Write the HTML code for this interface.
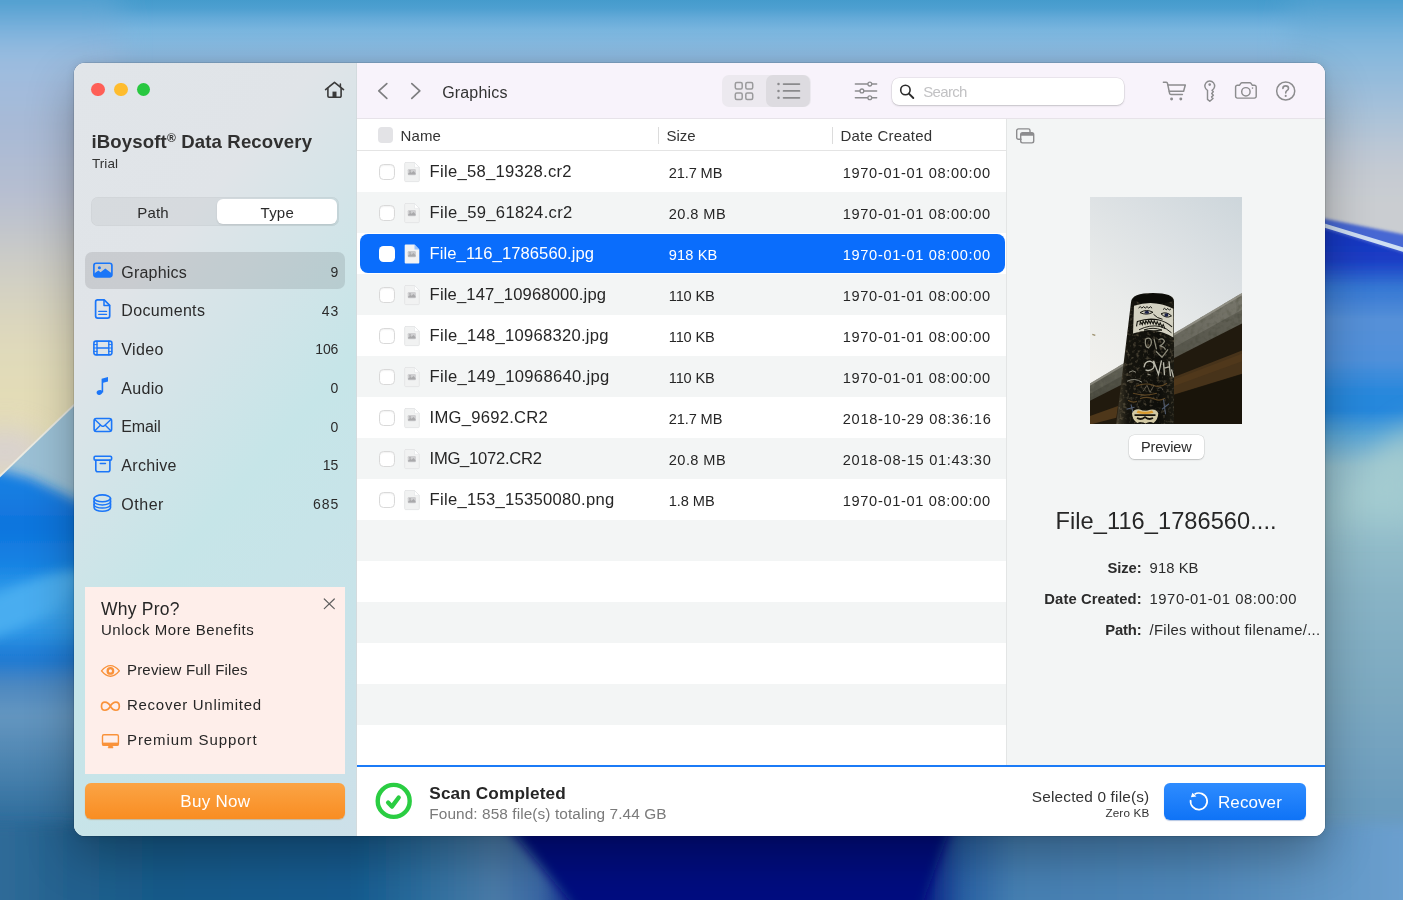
<!DOCTYPE html>
<html><head><meta charset="utf-8"><title>iBoysoft Data Recovery</title>
<style>
*{box-sizing:border-box;margin:0;padding:0}
html,body{width:1403px;height:900px;overflow:hidden;background:#4a8ec8;font-family:"Liberation Sans",sans-serif;color:#2b2b2b}
.abs{position:absolute}
#wall{position:absolute;left:0;top:0;width:1403px;height:900px}
#shadow{position:absolute;left:74px;top:63px;width:1251px;height:773px;border-radius:11px;box-shadow:0 20px 48px rgba(0,0,0,.30),0 0 10px rgba(0,0,0,.10),0 0 0 .5px rgba(0,0,0,.18)}
#win{position:absolute;left:74px;top:63px;width:1251px;height:773px;border-radius:11px;overflow:hidden;background:#fff;will-change:transform}
#side{position:absolute;left:0;top:0;width:283px;height:773px;background:linear-gradient(131deg,#e1e5e9 0%,#e0e4e8 26%,#d3e4e8 41%,#c6e5e8 56%,#c8e3e9 80%,#cde0e9 100%);border-right:1px solid #d3dbde}
#tool{position:absolute;left:283px;top:0;width:968px;height:56px;background:#f8f3fb;border-bottom:1px solid #e7e3e9}
#list{position:absolute;left:283px;top:56px;width:650px;height:647px;background:#fff;border-right:1px solid #e3e5e5}
#prev{position:absolute;left:933px;top:56px;width:318px;height:647px;background:#f3f5f5}
#bot{position:absolute;left:283px;top:702px;width:968px;height:71px;background:#fff;border-top:2px solid #1b7bf7}
.t{position:absolute;white-space:nowrap;line-height:1}
</style></head><body>
<svg id="wall" width="1403" height="900" viewBox="0 0 1403 900">
<defs>
<filter id="b1" filterUnits="userSpaceOnUse" x="-200" y="-200" width="1900" height="1400"><feGaussianBlur stdDeviation="0.7"/></filter>
<filter id="b4" filterUnits="userSpaceOnUse" x="-200" y="-200" width="1900" height="1400"><feGaussianBlur stdDeviation="1.4"/></filter>
<filter id="b10" filterUnits="userSpaceOnUse" x="-200" y="-200" width="1900" height="1400"><feGaussianBlur stdDeviation="6"/></filter>
<filter id="b20" filterUnits="userSpaceOnUse" x="-200" y="-200" width="1900" height="1400"><feGaussianBlur stdDeviation="14"/></filter>
<filter id="b40" filterUnits="userSpaceOnUse" x="-200" y="-200" width="1900" height="1400"><feGaussianBlur stdDeviation="30"/></filter>
<linearGradient id="gtop" gradientUnits="userSpaceOnUse" x1="0" y1="0" x2="0" y2="900"><stop offset="0.0000" stop-color="#459bcc"/><stop offset="0.0089" stop-color="#4d9fd0"/><stop offset="0.0200" stop-color="#64aad8"/><stop offset="0.0333" stop-color="#79b5de"/><stop offset="0.0467" stop-color="#84b9e0"/><stop offset="0.0600" stop-color="#8ab8de"/><stop offset="0.0733" stop-color="#90b8dc"/><stop offset="0.1333" stop-color="#9bbcdc"/><stop offset="0.2444" stop-color="#b4c2d6"/><stop offset="1.0000" stop-color="#b4c2d6"/></linearGradient><linearGradient id="gleft" gradientUnits="userSpaceOnUse" x1="0" y1="0" x2="0" y2="900"><stop offset="0.0000" stop-color="#489ccd"/><stop offset="0.0244" stop-color="#70aedb"/><stop offset="0.0533" stop-color="#93bbe0"/><stop offset="0.0833" stop-color="#a0bcde"/><stop offset="0.1444" stop-color="#a8b9d5"/><stop offset="0.2222" stop-color="#b8bfd0"/><stop offset="0.3000" stop-color="#cfcec5"/><stop offset="0.3778" stop-color="#dfd9bb"/><stop offset="0.4667" stop-color="#e4ddb5"/><stop offset="1.0000" stop-color="#e4ddb5"/></linearGradient><linearGradient id="gleftb" gradientUnits="userSpaceOnUse" x1="0" y1="400" x2="0" y2="900"><stop offset="0.0000" stop-color="#1a80e2"/><stop offset="0.1600" stop-color="#1a80e2"/><stop offset="0.2500" stop-color="#0f74de"/><stop offset="0.3300" stop-color="#1583e3"/><stop offset="0.4100" stop-color="#3fa7ed"/><stop offset="0.4640" stop-color="#2e96e6"/><stop offset="0.5160" stop-color="#1a78d4"/><stop offset="0.5700" stop-color="#4d88c0"/><stop offset="0.6300" stop-color="#6496c0"/><stop offset="0.7300" stop-color="#4c84b0"/><stop offset="0.8400" stop-color="#2f6d9c"/><stop offset="1.0000" stop-color="#1f5c90"/></linearGradient><linearGradient id="gright" gradientUnits="userSpaceOnUse" x1="0" y1="0" x2="0" y2="900"><stop offset="0.0000" stop-color="#459bcc"/><stop offset="0.0222" stop-color="#68acd9"/><stop offset="0.0533" stop-color="#84b8dd"/><stop offset="0.0833" stop-color="#92badb"/><stop offset="0.1278" stop-color="#a9c2d9"/><stop offset="0.1778" stop-color="#c2c9d3"/><stop offset="0.2222" stop-color="#cacdd1"/><stop offset="1.0000" stop-color="#cacdd1"/></linearGradient><linearGradient id="grightb" gradientUnits="userSpaceOnUse" x1="0" y1="225" x2="0" y2="900"><stop offset="0.0000" stop-color="#1735c0"/><stop offset="0.0519" stop-color="#1a3cc5"/><stop offset="0.0919" stop-color="#3476d3"/><stop offset="0.1407" stop-color="#5590d8"/><stop offset="0.2000" stop-color="#4f90da"/><stop offset="0.2444" stop-color="#2a88dc"/><stop offset="0.2741" stop-color="#2487dc"/><stop offset="0.3111" stop-color="#5aa6d6"/><stop offset="0.3585" stop-color="#93bfcd"/><stop offset="0.4444" stop-color="#95bfcb"/><stop offset="0.5481" stop-color="#88b3c5"/><stop offset="0.7037" stop-color="#7ba8c0"/><stop offset="0.8519" stop-color="#6b9cbe"/><stop offset="1.0000" stop-color="#6297c2"/></linearGradient><linearGradient id="gbot" gradientUnits="userSpaceOnUse" x1="0" y1="0" x2="1403" y2="0"><stop offset="0.0000" stop-color="#2f6b98"/><stop offset="0.0428" stop-color="#25628f"/><stop offset="0.1140" stop-color="#175a8a"/><stop offset="0.2495" stop-color="#135a8e"/><stop offset="0.3065" stop-color="#2f6f9f"/><stop offset="0.3528" stop-color="#4a7ba8"/><stop offset="0.3849" stop-color="#3a68a4"/><stop offset="0.4170" stop-color="#021283"/><stop offset="0.4989" stop-color="#010f80"/><stop offset="0.6522" stop-color="#010f80"/><stop offset="0.6878" stop-color="#2a62a4"/><stop offset="0.7234" stop-color="#457fb2"/><stop offset="0.8553" stop-color="#4f87b8"/><stop offset="0.9337" stop-color="#5f95c4"/><stop offset="1.0000" stop-color="#6b9fce"/></linearGradient>
</defs>
<rect width="1403" height="900" fill="url(#gtop)"/>
<!-- left column -->
<rect x="-80" y="-80" width="200" height="1060" fill="url(#gleft)" filter="url(#b20)"/>
<!-- right column -->
<rect x="1290" y="-80" width="200" height="1060" fill="url(#gright)" filter="url(#b20)"/>
<g filter="url(#b4)">
<polygon points="1290,212 1460,246 1460,940 1290,940" fill="url(#grightb)"/>
<polygon points="1290,212 1460,246 1460,270 1290,218" fill="#4768d3"/>
</g>
<polygon points="1290,213 1460,264.500 1460,269.500 1290,217" fill="#cfdff3" filter="url(#b1)"/>
<polygon points="1420,420 1420,520 1335,520 1335,490" fill="#a3cbd0" filter="url(#b20)"/>
<ellipse cx="5" cy="452" rx="42" ry="24" fill="#d6cfd6" filter="url(#b20)" opacity=".8"/>
<!-- left lower blue -->
<polygon points="-20,495 110,370 110,940 -20,940" fill="#9bc0d5" filter="url(#b1)"/>
<clipPath id="cdiag"><polygon points="-20,495 110,370 110,940 -20,940"/></clipPath>
<g clip-path="url(#cdiag)"><g filter="url(#b10)">
<polygon points="-40,462 0,470 30,478 60,492 80,502 130,512 130,960 -40,960" fill="url(#gleftb)"/>
</g></g>
<polygon points="-20,496.5 110,371.5 110,369 -20,494" fill="#ecebe2" filter="url(#b1)"/>
<ellipse cx="15" cy="608" rx="80" ry="19" fill="#48adf0" transform="rotate(-24 15 608)" filter="url(#b10)"/>
<!-- bottom strip -->
<rect x="-40" y="824" width="1483" height="140" fill="url(#gbot)" filter="url(#b10)"/>
<polygon points="498,815 955,815 918,915 582,915" fill="#010f80" filter="url(#b10)"/>
</svg>
<div id="shadow"></div>
<div id="win">
<div id="side"></div><div id="tool"></div><div id="list"></div><div id="prev"></div><div id="bot"></div>
<div class="abs" style="left:16.90px;top:19.70px;width:13.80px;height:13.80px;border-radius:50%;background:#fe5f57"></div>
<div class="abs" style="left:39.80px;top:19.70px;width:13.80px;height:13.80px;border-radius:50%;background:#febc2e"></div>
<div class="abs" style="left:62.50px;top:19.70px;width:13.80px;height:13.80px;border-radius:50%;background:#28c840"></div>
<svg class="abs" style="left:248.00px;top:15.00px;" width="26.00" height="24.00" viewBox="322 78 26 24"><path d="M325.6 89.6 L334.5 82.3 L343.5 89.6" fill="none" stroke="#3a3a3a" stroke-width="1.6" stroke-linecap="round" stroke-linejoin="round" /><path d="M327.9 88.4 V96 a1.2 1.2 0 0 0 1.2 1.2 H339.9 a1.2 1.2 0 0 0 1.2 -1.2 V88.4" fill="none" stroke="#3a3a3a" stroke-width="1.6" stroke-linecap="round" stroke-linejoin="round" /><path d="M340.4 83.9 V87" fill="none" stroke="#3a3a3a" stroke-width="1.5" stroke-linecap="round" stroke-linejoin="round" /><rect x="332.5" y="91.6" width="4" height="5.6" fill="#3a3a3a"/></svg>
<div class="t" style="top:70.00px;font-size:18.6px;color:#303030;font-weight:bold;letter-spacing:0.137px;left:17.40px;">iBoysoft<span style="font-size:12px;position:relative;top:-6.5px">&#174;</span> Data Recovery</div>
<div class="t" style="top:94.00px;font-size:13.5px;color:#333;letter-spacing:0.062px;left:18.00px;">Trial</div>
<div class="abs" style="left:16.90px;top:133.80px;width:248.10px;height:29.60px;background:rgba(0,0,0,.045);border-radius:7px;box-shadow:inset 0 0 0 .5px rgba(0,0,0,.04)"></div>
<div class="abs" style="left:143.30px;top:135.90px;width:119.70px;height:24.80px;background:#fff;border-radius:6px;box-shadow:0 1px 2px rgba(0,0,0,.10)"></div>
<div class="t" style="top:142.00px;font-size:15px;color:#2b2b2b;letter-spacing:0.18px;left:79.09px;transform:translateX(-50%);">Path</div>
<div class="t" style="top:142.00px;font-size:15px;color:#2b2b2b;letter-spacing:0.223px;left:203.31px;transform:translateX(-50%);">Type</div>
<div class="abs" style="left:11.20px;top:188.90px;width:259.80px;height:37.50px;background:rgba(0,0,0,.10);border-radius:7px"></div>
<div class="t" style="top:202.00px;font-size:16px;color:#2b2b2b;letter-spacing:0.196px;left:47.30px;">Graphics</div>
<div class="t" style="top:202.00px;font-size:14px;color:#2b2b2b;right:986.60px;">9</div>
<svg class="abs" style="left:16.00px;top:194.15px;" width="26.00" height="26.00" viewBox="90 257.15 26 26.0"><rect x="93.9" y="263.40" width="18" height="13.6" rx="2.3" fill="none" stroke="#1b76f8" stroke-width="1.7" stroke-linecap="round" stroke-linejoin="round" /><circle cx="99.4" cy="267.85" r="1.55" fill="#1b76f8"/><path d="M94.2 273.55 L98.4 270.75 L100.6 272.45 L105.3 268.55 L111.6 273.35 V276.75 H94.2 Z" fill="#1b76f8"/></svg>
<div class="t" style="top:240.00px;font-size:16px;color:#2b2b2b;letter-spacing:0.335px;left:47.30px;">Documents</div>
<div class="t" style="top:241.00px;font-size:14px;color:#2b2b2b;letter-spacing:1.022px;right:985.58px;">43</div>
<svg class="abs" style="left:16.00px;top:233.20px;" width="26.00" height="26.00" viewBox="90 296.2 26 26.0"><path d="M97.6 300.10 H104.2 L109.7 305.60 V316.30 A2 2 0 0 1 107.7 318.30 H97.6 A2 2 0 0 1 95.6 316.30 V302.10 A2 2 0 0 1 97.6 300.10 Z" fill="none" stroke="#1b76f8" stroke-width="1.7" stroke-linecap="round" stroke-linejoin="round" /><path d="M104 300.40 V305.70 H109.5" fill="none" stroke="#1b76f8" stroke-width="1.5" stroke-linecap="round" stroke-linejoin="round" /><path d="M98.8 311.60 H106.5 M98.8 314.60 H106.5" fill="none" stroke="#1b76f8" stroke-width="1.4" stroke-linecap="round" stroke-linejoin="round" /></svg>
<div class="t" style="top:279.00px;font-size:16px;color:#2b2b2b;letter-spacing:0.365px;left:47.30px;">Video</div>
<div class="t" style="top:279.00px;font-size:14px;color:#2b2b2b;letter-spacing:-0.08px;right:986.68px;">106</div>
<svg class="abs" style="left:16.00px;top:271.70px;" width="26.00" height="26.00" viewBox="90 334.7 26 26.0"><rect x="93.9" y="340.85" width="18" height="13.7" rx="2" fill="none" stroke="#1b76f8" stroke-width="1.6" stroke-linecap="round" stroke-linejoin="round" /><path d="M97 340.90 V354.50 M108.8 340.90 V354.50 M97 347.70 H108.8" fill="none" stroke="#1b76f8" stroke-width="1.4" stroke-linecap="round" stroke-linejoin="round" /><path d="M94 344.30 H97 M108.8 344.30 H111.8" fill="none" stroke="#1b76f8" stroke-width="1" stroke-linecap="round" stroke-linejoin="round" /><path d="M94 347.70 H97 M108.8 347.70 H111.8" fill="none" stroke="#1b76f8" stroke-width="1" stroke-linecap="round" stroke-linejoin="round" /><path d="M94 351.10 H97 M108.8 351.10 H111.8" fill="none" stroke="#1b76f8" stroke-width="1" stroke-linecap="round" stroke-linejoin="round" /></svg>
<div class="t" style="top:318.00px;font-size:16px;color:#2b2b2b;letter-spacing:0.295px;left:47.30px;">Audio</div>
<div class="t" style="top:318.00px;font-size:14px;color:#2b2b2b;right:986.60px;">0</div>
<svg class="abs" style="left:16.00px;top:309.90px;" width="26.00" height="26.00" viewBox="90 372.9 26 26.0"><ellipse cx="99.5" cy="392.40" rx="2.9" ry="2.3" transform="rotate(-20 99.5 392.40)" fill="#1b76f8"/><path d="M101.6 392.50 V378.60 L108 376.90 V381.50 L103.2 382.70 V392.50 Z" fill="#1b76f8"/></svg>
<div class="t" style="top:356.00px;font-size:16px;color:#2b2b2b;letter-spacing:-0.154px;left:47.30px;">Email</div>
<div class="t" style="top:357.00px;font-size:14px;color:#2b2b2b;right:986.60px;">0</div>
<svg class="abs" style="left:16.00px;top:349.00px;" width="26.00" height="26.00" viewBox="90 412.0 26 26.0"><rect x="94.1" y="418.50" width="17.5" height="13" rx="2.2" fill="none" stroke="#1b76f8" stroke-width="1.6" stroke-linecap="round" stroke-linejoin="round" /><path d="M94.8 419.40 L101.6 425.90 Q102.85 426.90 104.1 425.90 L110.9 419.40" fill="none" stroke="#1b76f8" stroke-width="1.4" stroke-linecap="round" stroke-linejoin="round" /><path d="M94.9 430.70 L100.4 425.20 M110.8 430.70 L105.3 425.20" fill="none" stroke="#1b76f8" stroke-width="1.4" stroke-linecap="round" stroke-linejoin="round" /></svg>
<div class="t" style="top:395.00px;font-size:16px;color:#2b2b2b;letter-spacing:0.307px;left:47.30px;">Archive</div>
<div class="t" style="top:395.00px;font-size:14px;color:#2b2b2b;right:986.60px;">15</div>
<svg class="abs" style="left:16.00px;top:387.90px;" width="26.00" height="26.00" viewBox="90 450.9 26 26.0"><rect x="94.1" y="456.10" width="17.5" height="3.9" rx="1.2" fill="none" stroke="#1b76f8" stroke-width="1.6" stroke-linecap="round" stroke-linejoin="round" /><path d="M95.8 460.10 V469.60 A2 2 0 0 0 97.8 471.60 H107.9 A2 2 0 0 0 109.9 469.60 V460.10" fill="none" stroke="#1b76f8" stroke-width="1.6" stroke-linecap="round" stroke-linejoin="round" /><path d="M100.3 463.40 H105.4" fill="none" stroke="#1b76f8" stroke-width="1.6" stroke-linecap="round" stroke-linejoin="round" /></svg>
<div class="t" style="top:434.00px;font-size:16px;color:#2b2b2b;letter-spacing:0.521px;left:47.30px;">Other</div>
<div class="t" style="top:434.00px;font-size:14px;color:#2b2b2b;letter-spacing:0.97px;right:985.63px;">685</div>
<svg class="abs" style="left:16.00px;top:426.90px;" width="26.00" height="26.00" viewBox="90 489.9 26 26.0"><ellipse cx="102.3" cy="498.20" rx="8.2" ry="3.4" fill="none" stroke="#1b76f8" stroke-width="1.6" stroke-linecap="round" stroke-linejoin="round" /><path d="M94.1 498.20 V507.70 A8.2 3.4 0 0 0 110.5 507.70 V498.20" fill="none" stroke="#1b76f8" stroke-width="1.6" stroke-linecap="round" stroke-linejoin="round" /><path d="M94.1 501.40 A8.2 3.4 0 0 0 110.5 501.40 M94.1 504.60 A8.2 3.4 0 0 0 110.5 504.60" fill="none" stroke="#1b76f8" stroke-width="1.5" stroke-linecap="round" stroke-linejoin="round" /></svg>
<div class="abs" style="left:11.20px;top:524.40px;width:259.80px;height:186.40px;background:#feeeea"></div>
<div class="t" style="top:538.00px;font-size:17.5px;color:#262626;letter-spacing:0.239px;left:27.00px;">Why Pro?</div>
<div class="t" style="top:559.00px;font-size:15px;color:#262626;letter-spacing:0.534px;left:27.00px;">Unlock More Benefits</div>
<div class="t" style="top:599.00px;font-size:15px;color:#262626;letter-spacing:0.181px;left:53.00px;">Preview Full Files</div>
<svg class="abs" style="left:24.00px;top:592.80px;" width="26.00" height="28.00" viewBox="98 655.8 26 28.0"><path d="M101.5 670.70 Q110.4 660.10 119.4 670.70 Q110.4 681.30 101.5 670.70 Z" fill="none" stroke="#f9923a" stroke-width="1.4" stroke-linecap="round" stroke-linejoin="round" /><circle cx="110.4" cy="670.70" r="2.75" fill="none" stroke="#f9923a" stroke-width="2.3" stroke-linecap="round" stroke-linejoin="round" /></svg>
<div class="t" style="top:634.00px;font-size:15px;color:#262626;letter-spacing:0.722px;left:53.00px;">Recover Unlimited</div>
<svg class="abs" style="left:24.00px;top:627.60px;" width="26.00" height="28.00" viewBox="98 690.6 26 28.0"><path d="M110.4 705.80 C107.6 700.40 101.5 700.40 101.5 705.80 C101.5 711.20 107.6 711.20 110.4 705.80 C113.2 700.40 119.3 700.40 119.3 705.80 C119.3 711.20 113.2 711.20 110.4 705.80 Z" fill="none" stroke="#f9923a" stroke-width="1.7" stroke-linecap="round" stroke-linejoin="round" /></svg>
<div class="t" style="top:669.00px;font-size:15px;color:#262626;letter-spacing:0.927px;left:53.00px;">Premium Support</div>
<svg class="abs" style="left:24.00px;top:662.60px;" width="26.00" height="28.00" viewBox="98 725.6 26 28.0"><rect x="102.5" y="734.4" width="15.9" height="10.5" rx="1.4" fill="none" stroke="#f9923a" stroke-width="1.4" stroke-linecap="round" stroke-linejoin="round" /><rect x="102.5" y="742.2" width="15.9" height="3" fill="#f9923a"/><path d="M108.8 745 L108.1 747.6 H113.1 L112.4 745 Z" fill="#f9923a" stroke="#f9923a" stroke-width=".5"/></svg>
<svg class="abs" style="left:246.00px;top:531.00px;" width="20.00" height="20.00" viewBox="320 594 20 20"><path d="M324.3 599 L334.3 608.6 M334.3 599 L324.3 608.6" fill="none" stroke="#5f5f5f" stroke-width="1.2" stroke-linecap="round" stroke-linejoin="round" /></svg>
<div class="abs" style="left:11.20px;top:720.20px;width:259.80px;height:35.70px;border-radius:6px;background:linear-gradient(#fba445,#f98d22);box-shadow:0 1px 1px rgba(190,100,10,.35)"></div>
<div class="t" style="top:730.00px;font-size:17px;color:#fff;letter-spacing:0.311px;left:141.36px;transform:translateX(-50%);">Buy Now</div>
<svg class="abs" style="left:300.00px;top:17.00px;" width="18.00" height="22.00" viewBox="374 80 18 22"><path d="M386.8 83.6 L378.8 90.9 L386.8 98.3" fill="none" stroke="#7e7e80" stroke-width="1.7" stroke-linecap="round" stroke-linejoin="round" /></svg>
<svg class="abs" style="left:333.00px;top:17.00px;" width="18.00" height="22.00" viewBox="407 80 18 22"><path d="M411.8 83.6 L419.8 90.9 L411.8 98.3" fill="none" stroke="#7e7e80" stroke-width="1.7" stroke-linecap="round" stroke-linejoin="round" /></svg>
<div class="t" style="top:22.00px;font-size:16px;color:#333;letter-spacing:0.167px;left:368.20px;">Graphics</div>
<div class="abs" style="left:648.00px;top:12.00px;width:88.50px;height:31.60px;background:#ece9ef;border-radius:7px"></div>
<div class="abs" style="left:692.30px;top:12.00px;width:44.20px;height:31.60px;background:#dddbe0;border-radius:7px"></div>
<svg class="abs" style="left:656.00px;top:15.00px;" width="28.00" height="26.00" viewBox="730 78 28 26"><rect x="735.3" y="82.5" width="6.9" height="6.5" rx="1.5" fill="none" stroke="#9a9a9c" stroke-width="1.5" stroke-linecap="round" stroke-linejoin="round" /><rect x="745.8" y="82.5" width="6.9" height="6.5" rx="1.5" fill="none" stroke="#9a9a9c" stroke-width="1.5" stroke-linecap="round" stroke-linejoin="round" /><rect x="735.3" y="93" width="6.9" height="6.5" rx="1.5" fill="none" stroke="#9a9a9c" stroke-width="1.5" stroke-linecap="round" stroke-linejoin="round" /><rect x="745.8" y="93" width="6.9" height="6.5" rx="1.5" fill="none" stroke="#9a9a9c" stroke-width="1.5" stroke-linecap="round" stroke-linejoin="round" /></svg>
<svg class="abs" style="left:700.00px;top:15.00px;" width="30.00" height="26.00" viewBox="774 78 30 26"><circle cx="778.5" cy="84.1" r="1.25" fill="#8a8a8c"/><path d="M783.6 84.1 H799.4" fill="none" stroke="#8a8a8c" stroke-width="1.8" stroke-linecap="round" stroke-linejoin="round" /><circle cx="778.5" cy="90.9" r="1.25" fill="#8a8a8c"/><path d="M783.6 90.9 H799.4" fill="none" stroke="#8a8a8c" stroke-width="1.8" stroke-linecap="round" stroke-linejoin="round" /><circle cx="778.5" cy="97.8" r="1.25" fill="#8a8a8c"/><path d="M783.6 97.8 H799.4" fill="none" stroke="#8a8a8c" stroke-width="1.8" stroke-linecap="round" stroke-linejoin="round" /></svg>
<svg class="abs" style="left:776.00px;top:15.00px;" width="32.00" height="26.00" viewBox="850 78 32 26"><path d="M855.4 84.1 H876.6" fill="none" stroke="#8c8c8e" stroke-width="1.5" stroke-linecap="round" stroke-linejoin="round" /><path d="M855.4 90.9 H876.6" fill="none" stroke="#8c8c8e" stroke-width="1.5" stroke-linecap="round" stroke-linejoin="round" /><path d="M855.4 97.8 H876.6" fill="none" stroke="#8c8c8e" stroke-width="1.5" stroke-linecap="round" stroke-linejoin="round" /><circle cx="869.8" cy="84.1" r="1.9" fill="#f8f3fb" stroke="#8c8c8e" stroke-width="1.3"/><circle cx="861.9" cy="90.9" r="1.9" fill="#f8f3fb" stroke="#8c8c8e" stroke-width="1.3"/><circle cx="869.8" cy="97.8" r="1.9" fill="#f8f3fb" stroke="#8c8c8e" stroke-width="1.3"/></svg>
<div class="abs" style="left:818.40px;top:14.80px;width:231.60px;height:26.80px;background:#fff;border-radius:7px;box-shadow:0 0 0 .5px rgba(0,0,0,.10),0 1px 2px rgba(0,0,0,.16)"></div>
<svg class="abs" style="left:823.00px;top:17.00px;" width="21.00" height="22.00" viewBox="897 80 21 22"><circle cx="905.4" cy="90" r="4.7" fill="none" stroke="#2b2b2b" stroke-width="1.6" stroke-linecap="round" stroke-linejoin="round" /><path d="M908.9 93.6 L913.3 98" fill="none" stroke="#2b2b2b" stroke-width="1.9" stroke-linecap="round" stroke-linejoin="round" /></svg>
<div class="t" style="top:21.00px;font-size:15px;color:#c2c2c4;letter-spacing:-0.666px;left:849.20px;">Search</div>
<svg class="abs" style="left:1084.00px;top:15.00px;" width="32.00" height="26.00" viewBox="1158 78 32 26"><path d="M1163.4 82.3 H1166.3 Q1167.3 82.3 1167.5 83.3 L1169.6 93.3 Q1169.8 94.5 1171 94.5 H1182.4" fill="none" stroke="#8c8c8e" stroke-width="1.5" stroke-linecap="round" stroke-linejoin="round" /><path d="M1168 85 H1185.3 L1183.6 91.2 H1169.3" fill="none" stroke="#8c8c8e" stroke-width="1.5" stroke-linecap="round" stroke-linejoin="round" /><circle cx="1171.6" cy="99" r="1.45" fill="#8c8c8e"/><circle cx="1180.8" cy="99" r="1.45" fill="#8c8c8e"/></svg>
<svg class="abs" style="left:1126.00px;top:14.00px;" width="20.00" height="28.00" viewBox="1200 77 20 28"><path d="M1207.5 90.3 A4.9 4.9 0 1 1 1212 90.3 L1213.3 91.8 L1211.7 93.4 L1213.4 95.2 L1211.6 96.9 L1213 98.5 L1209.8 101.3 L1207.5 99.4 Z" fill="none" stroke="#8c8c8e" stroke-width="1.45" stroke-linecap="round" stroke-linejoin="round" /><circle cx="1209.7" cy="84.6" r="1.3" fill="#8c8c8e"/></svg>
<svg class="abs" style="left:1156.00px;top:15.00px;" width="32.00" height="26.00" viewBox="1230 78 32 26"><path d="M1237.4 85.2 H1239.6 L1240.8 83.3 Q1241.2 82.7 1242 82.7 H1249.8 Q1250.6 82.7 1251 83.3 L1252.2 85.2 H1254.4 A1.8 1.8 0 0 1 1256.2 87 V96.3 A1.8 1.8 0 0 1 1254.4 98.1 H1237.4 A1.8 1.8 0 0 1 1235.6 96.3 V87 A1.8 1.8 0 0 1 1237.4 85.2 Z" fill="none" stroke="#8c8c8e" stroke-width="1.45" stroke-linecap="round" stroke-linejoin="round" /><circle cx="1245.9" cy="91.8" r="4.2" fill="none" stroke="#8c8c8e" stroke-width="1.45" stroke-linecap="round" stroke-linejoin="round" /><circle cx="1252.5" cy="88.1" r=".8" fill="#8c8c8e"/></svg>
<svg class="abs" style="left:1198.00px;top:15.00px;" width="28.00" height="26.00" viewBox="1272 78 28 26"><circle cx="1285.7" cy="91" r="9.05" fill="none" stroke="#8c8c8e" stroke-width="1.5" stroke-linecap="round" stroke-linejoin="round" /><path d="M1282.9 88.4 Q1282.9 85.9 1285.7 85.9 Q1288.5 85.9 1288.5 88.2 Q1288.5 89.7 1286.9 90.6 Q1285.7 91.4 1285.7 93" fill="none" stroke="#8c8c8e" stroke-width="1.6" stroke-linecap="round" stroke-linejoin="round" /><circle cx="1285.7" cy="95.9" r="1.05" fill="#8c8c8e"/></svg>
<div class="abs" style="left:283.00px;top:87.30px;width:649.00px;height:1.00px;background:#e4e4e4"></div>
<div class="abs" style="left:304.00px;top:64.40px;width:15.40px;height:16.00px;background:#e3e3e6;border-radius:4px"></div>
<div class="t" style="top:65.00px;font-size:15px;color:#333;letter-spacing:0.061px;left:326.60px;">Name</div>
<div class="abs" style="left:584.00px;top:64.00px;width:1.00px;height:17.00px;background:#dcdcdc"></div>
<div class="t" style="top:65.00px;font-size:15px;color:#333;letter-spacing:-0.062px;left:592.50px;">Size</div>
<div class="abs" style="left:758.00px;top:64.00px;width:1.00px;height:17.00px;background:#dcdcdc"></div>
<div class="t" style="top:65.00px;font-size:15px;color:#333;letter-spacing:0.216px;left:766.50px;">Date Created</div>
<div class="abs" style="left:283.00px;top:129.30px;width:649.00px;height:40.94px;background:#f3f5f5"></div>
<div class="abs" style="left:283.00px;top:211.18px;width:649.00px;height:40.94px;background:#f3f5f5"></div>
<div class="abs" style="left:283.00px;top:293.06px;width:649.00px;height:40.94px;background:#f3f5f5"></div>
<div class="abs" style="left:283.00px;top:374.94px;width:649.00px;height:40.94px;background:#f3f5f5"></div>
<div class="abs" style="left:283.00px;top:456.82px;width:649.00px;height:40.94px;background:#f3f5f5"></div>
<div class="abs" style="left:283.00px;top:538.70px;width:649.00px;height:40.94px;background:#f3f5f5"></div>
<div class="abs" style="left:283.00px;top:620.58px;width:649.00px;height:40.94px;background:#f3f5f5"></div>
<div class="abs" style="left:305.00px;top:101.45px;width:16.00px;height:16.00px;background:#fff;border-radius:4.5px;border:1px solid #d9d9d9;box-shadow:inset 0 1px 1.5px rgba(0,0,0,.06)"></div>
<svg class="abs" style="left:328.00px;top:97.45px;" width="20.00" height="24.00" viewBox="402 160.45 20 24.0"><path d="M405 162.95 H414.5 L419.3 167.85 V181.05 Q419.3 182.05 418.3 182.05 H405.7 Q404.7 182.05 404.7 181.05 V163.95 Q404.7 162.95 405.7 162.95 Z" fill="#f1f2f2" stroke="#e3e4e5" stroke-width=".9"/><path d="M414.5 162.95 V167.85 H419.3 Z" fill="#fff" stroke="#e3e4e5" stroke-width=".6"/><rect x="407.7" y="169.35" width="8.2" height="6.3" rx="1.3" fill="#cfcfd1"/><path d="M408.2 174.05 L410.3 172.25 L411.6 173.25 L413.6 171.35 L415.5 173.65 V175.05 H408.2 Z" fill="#a9a9ab"/><circle cx="410" cy="171.35" r=".7" fill="#8f8f91"/></svg>
<div class="t" style="top:101.00px;font-size:16.6px;color:#262626;letter-spacing:0.277px;left:355.60px;">File_58_19328.cr2</div>
<div class="t" style="top:103.00px;font-size:14.6px;color:#262626;letter-spacing:-0.127px;left:594.80px;">21.7 MB</div>
<div class="t" style="top:103.00px;font-size:14.6px;color:#262626;letter-spacing:0.655px;left:768.80px;">1970-01-01 08:00:00</div>
<div class="abs" style="left:305.00px;top:142.42px;width:16.00px;height:16.00px;background:#fff;border-radius:4.5px;border:1px solid #d9d9d9;box-shadow:inset 0 1px 1.5px rgba(0,0,0,.06)"></div>
<svg class="abs" style="left:328.00px;top:138.42px;" width="20.00" height="24.00" viewBox="402 201.42 20 24.0"><path d="M405 203.92 H414.5 L419.3 208.82 V222.02 Q419.3 223.02 418.3 223.02 H405.7 Q404.7 223.02 404.7 222.02 V204.92 Q404.7 203.92 405.7 203.92 Z" fill="#f1f2f2" stroke="#e3e4e5" stroke-width=".9"/><path d="M414.5 203.92 V208.82 H419.3 Z" fill="#fff" stroke="#e3e4e5" stroke-width=".6"/><rect x="407.7" y="210.32" width="8.2" height="6.3" rx="1.3" fill="#cfcfd1"/><path d="M408.2 215.02 L410.3 213.22 L411.6 214.22 L413.6 212.32 L415.5 214.62 V216.02 H408.2 Z" fill="#a9a9ab"/><circle cx="410" cy="212.32" r=".7" fill="#8f8f91"/></svg>
<div class="t" style="top:142.00px;font-size:16.6px;color:#262626;letter-spacing:0.327px;left:355.60px;">File_59_61824.cr2</div>
<div class="t" style="top:144.00px;font-size:14.6px;color:#262626;letter-spacing:0.423px;left:594.80px;">20.8 MB</div>
<div class="t" style="top:144.00px;font-size:14.6px;color:#262626;letter-spacing:0.655px;left:768.80px;">1970-01-01 08:00:00</div>
<div class="abs" style="left:285.50px;top:171.30px;width:645.50px;height:38.60px;background:#0a6dfc;border-radius:8px"></div>
<div class="abs" style="left:305.00px;top:183.39px;width:16.00px;height:16.00px;background:#fff;border-radius:4.5px"></div>
<svg class="abs" style="left:328.00px;top:179.39px;" width="20.00" height="24.00" viewBox="402 242.39 20 24.0"><path d="M405 244.89 H414.5 L419.3 249.79 V262.99 Q419.3 263.99 418.3 263.99 H405.7 Q404.7 263.99 404.7 262.99 V245.89 Q404.7 244.89 405.7 244.89 Z" fill="#f2f3f4" stroke="none" stroke-width=".9"/><path d="M414.5 244.89 V249.79 H419.3 Z" fill="#9cc4fb" stroke="none" stroke-width=".6"/><rect x="407.7" y="251.29" width="8.2" height="6.3" rx="1.3" fill="#c9cacc"/><path d="M408.2 255.99 L410.3 254.19 L411.6 255.19 L413.6 253.29 L415.5 255.59 V256.99 H408.2 Z" fill="#a9a9ab"/><circle cx="410" cy="253.29" r=".7" fill="#8f8f91"/></svg>
<div class="t" style="top:183.00px;font-size:16.6px;color:#fff;letter-spacing:0.073px;left:355.60px;">File_116_1786560.jpg</div>
<div class="t" style="top:185.00px;font-size:14.6px;color:#fff;letter-spacing:0.125px;left:594.80px;">918 KB</div>
<div class="t" style="top:185.00px;font-size:14.6px;color:#fff;letter-spacing:0.655px;left:768.80px;">1970-01-01 08:00:00</div>
<div class="abs" style="left:305.00px;top:224.36px;width:16.00px;height:16.00px;background:#fff;border-radius:4.5px;border:1px solid #d9d9d9;box-shadow:inset 0 1px 1.5px rgba(0,0,0,.06)"></div>
<svg class="abs" style="left:328.00px;top:220.36px;" width="20.00" height="24.00" viewBox="402 283.36 20 24.0"><path d="M405 285.86 H414.5 L419.3 290.76 V303.96 Q419.3 304.96 418.3 304.96 H405.7 Q404.7 304.96 404.7 303.96 V286.86 Q404.7 285.86 405.7 285.86 Z" fill="#f1f2f2" stroke="#e3e4e5" stroke-width=".9"/><path d="M414.5 285.86 V290.76 H419.3 Z" fill="#fff" stroke="#e3e4e5" stroke-width=".6"/><rect x="407.7" y="292.26" width="8.2" height="6.3" rx="1.3" fill="#cfcfd1"/><path d="M408.2 296.96 L410.3 295.16 L411.6 296.16 L413.6 294.26 L415.5 296.56 V297.96 H408.2 Z" fill="#a9a9ab"/><circle cx="410" cy="294.26" r=".7" fill="#8f8f91"/></svg>
<div class="t" style="top:224.00px;font-size:16.6px;color:#262626;letter-spacing:0.147px;left:355.60px;">File_147_10968000.jpg</div>
<div class="t" style="top:226.00px;font-size:14.6px;color:#262626;letter-spacing:-0.179px;left:594.80px;">110 KB</div>
<div class="t" style="top:226.00px;font-size:14.6px;color:#262626;letter-spacing:0.655px;left:768.80px;">1970-01-01 08:00:00</div>
<div class="abs" style="left:305.00px;top:265.33px;width:16.00px;height:16.00px;background:#fff;border-radius:4.5px;border:1px solid #d9d9d9;box-shadow:inset 0 1px 1.5px rgba(0,0,0,.06)"></div>
<svg class="abs" style="left:328.00px;top:261.33px;" width="20.00" height="24.00" viewBox="402 324.33 20 24.0"><path d="M405 326.83 H414.5 L419.3 331.73 V344.93 Q419.3 345.93 418.3 345.93 H405.7 Q404.7 345.93 404.7 344.93 V327.83 Q404.7 326.83 405.7 326.83 Z" fill="#f1f2f2" stroke="#e3e4e5" stroke-width=".9"/><path d="M414.5 326.83 V331.73 H419.3 Z" fill="#fff" stroke="#e3e4e5" stroke-width=".6"/><rect x="407.7" y="333.23" width="8.2" height="6.3" rx="1.3" fill="#cfcfd1"/><path d="M408.2 337.93 L410.3 336.13 L411.6 337.13 L413.6 335.23 L415.5 337.53 V338.93 H408.2 Z" fill="#a9a9ab"/><circle cx="410" cy="335.23" r=".7" fill="#8f8f91"/></svg>
<div class="t" style="top:265.00px;font-size:16.6px;color:#262626;letter-spacing:0.272px;left:355.60px;">File_148_10968320.jpg</div>
<div class="t" style="top:267.00px;font-size:14.6px;color:#262626;letter-spacing:-0.179px;left:594.80px;">110 KB</div>
<div class="t" style="top:267.00px;font-size:14.6px;color:#262626;letter-spacing:0.655px;left:768.80px;">1970-01-01 08:00:00</div>
<div class="abs" style="left:305.00px;top:306.30px;width:16.00px;height:16.00px;background:#fff;border-radius:4.5px;border:1px solid #d9d9d9;box-shadow:inset 0 1px 1.5px rgba(0,0,0,.06)"></div>
<svg class="abs" style="left:328.00px;top:302.30px;" width="20.00" height="24.00" viewBox="402 365.29999999999995 20 24.0"><path d="M405 367.80 H414.5 L419.3 372.70 V385.90 Q419.3 386.90 418.3 386.90 H405.7 Q404.7 386.90 404.7 385.90 V368.80 Q404.7 367.80 405.7 367.80 Z" fill="#f1f2f2" stroke="#e3e4e5" stroke-width=".9"/><path d="M414.5 367.80 V372.70 H419.3 Z" fill="#fff" stroke="#e3e4e5" stroke-width=".6"/><rect x="407.7" y="374.20" width="8.2" height="6.3" rx="1.3" fill="#cfcfd1"/><path d="M408.2 378.90 L410.3 377.10 L411.6 378.10 L413.6 376.20 L415.5 378.50 V379.90 H408.2 Z" fill="#a9a9ab"/><circle cx="410" cy="376.20" r=".7" fill="#8f8f91"/></svg>
<div class="t" style="top:306.00px;font-size:16.6px;color:#262626;letter-spacing:0.307px;left:355.60px;">File_149_10968640.jpg</div>
<div class="t" style="top:308.00px;font-size:14.6px;color:#262626;letter-spacing:-0.179px;left:594.80px;">110 KB</div>
<div class="t" style="top:308.00px;font-size:14.6px;color:#262626;letter-spacing:0.655px;left:768.80px;">1970-01-01 08:00:00</div>
<div class="abs" style="left:305.00px;top:347.27px;width:16.00px;height:16.00px;background:#fff;border-radius:4.5px;border:1px solid #d9d9d9;box-shadow:inset 0 1px 1.5px rgba(0,0,0,.06)"></div>
<svg class="abs" style="left:328.00px;top:343.27px;" width="20.00" height="24.00" viewBox="402 406.27 20 24.0"><path d="M405 408.77 H414.5 L419.3 413.67 V426.87 Q419.3 427.87 418.3 427.87 H405.7 Q404.7 427.87 404.7 426.87 V409.77 Q404.7 408.77 405.7 408.77 Z" fill="#f1f2f2" stroke="#e3e4e5" stroke-width=".9"/><path d="M414.5 408.77 V413.67 H419.3 Z" fill="#fff" stroke="#e3e4e5" stroke-width=".6"/><rect x="407.7" y="415.17" width="8.2" height="6.3" rx="1.3" fill="#cfcfd1"/><path d="M408.2 419.87 L410.3 418.07 L411.6 419.07 L413.6 417.17 L415.5 419.47 V420.87 H408.2 Z" fill="#a9a9ab"/><circle cx="410" cy="417.17" r=".7" fill="#8f8f91"/></svg>
<div class="t" style="top:347.00px;font-size:16.6px;color:#262626;letter-spacing:0.264px;left:355.60px;">IMG_9692.CR2</div>
<div class="t" style="top:349.00px;font-size:14.6px;color:#262626;letter-spacing:-0.127px;left:594.80px;">21.7 MB</div>
<div class="t" style="top:349.00px;font-size:14.6px;color:#262626;letter-spacing:0.694px;left:768.80px;">2018-10-29 08:36:16</div>
<div class="abs" style="left:305.00px;top:388.24px;width:16.00px;height:16.00px;background:#fff;border-radius:4.5px;border:1px solid #d9d9d9;box-shadow:inset 0 1px 1.5px rgba(0,0,0,.06)"></div>
<svg class="abs" style="left:328.00px;top:384.24px;" width="20.00" height="24.00" viewBox="402 447.23999999999995 20 24.0"><path d="M405 449.74 H414.5 L419.3 454.64 V467.84 Q419.3 468.84 418.3 468.84 H405.7 Q404.7 468.84 404.7 467.84 V450.74 Q404.7 449.74 405.7 449.74 Z" fill="#f1f2f2" stroke="#e3e4e5" stroke-width=".9"/><path d="M414.5 449.74 V454.64 H419.3 Z" fill="#fff" stroke="#e3e4e5" stroke-width=".6"/><rect x="407.7" y="456.14" width="8.2" height="6.3" rx="1.3" fill="#cfcfd1"/><path d="M408.2 460.84 L410.3 459.04 L411.6 460.04 L413.6 458.14 L415.5 460.44 V461.84 H408.2 Z" fill="#a9a9ab"/><circle cx="410" cy="458.14" r=".7" fill="#8f8f91"/></svg>
<div class="t" style="top:388.00px;font-size:16.6px;color:#262626;letter-spacing:-0.272px;left:355.60px;">IMG_1072.CR2</div>
<div class="t" style="top:390.00px;font-size:14.6px;color:#262626;letter-spacing:0.423px;left:594.80px;">20.8 MB</div>
<div class="t" style="top:390.00px;font-size:14.6px;color:#262626;letter-spacing:0.694px;left:768.80px;">2018-08-15 01:43:30</div>
<div class="abs" style="left:305.00px;top:429.21px;width:16.00px;height:16.00px;background:#fff;border-radius:4.5px;border:1px solid #d9d9d9;box-shadow:inset 0 1px 1.5px rgba(0,0,0,.06)"></div>
<svg class="abs" style="left:328.00px;top:425.21px;" width="20.00" height="24.00" viewBox="402 488.21 20 24.000000000000057"><path d="M405 490.71 H414.5 L419.3 495.61 V508.81 Q419.3 509.81 418.3 509.81 H405.7 Q404.7 509.81 404.7 508.81 V491.71 Q404.7 490.71 405.7 490.71 Z" fill="#f1f2f2" stroke="#e3e4e5" stroke-width=".9"/><path d="M414.5 490.71 V495.61 H419.3 Z" fill="#fff" stroke="#e3e4e5" stroke-width=".6"/><rect x="407.7" y="497.11" width="8.2" height="6.3" rx="1.3" fill="#cfcfd1"/><path d="M408.2 501.81 L410.3 500.01 L411.6 501.01 L413.6 499.11 L415.5 501.41 V502.81 H408.2 Z" fill="#a9a9ab"/><circle cx="410" cy="499.11" r=".7" fill="#8f8f91"/></svg>
<div class="t" style="top:429.00px;font-size:16.6px;color:#262626;letter-spacing:0.279px;left:355.60px;">File_153_15350080.png</div>
<div class="t" style="top:431.00px;font-size:14.6px;color:#262626;letter-spacing:-0.067px;left:594.80px;">1.8 MB</div>
<div class="t" style="top:431.00px;font-size:14.6px;color:#262626;letter-spacing:0.655px;left:768.80px;">1970-01-01 08:00:00</div>
<svg class="abs" style="left:938.00px;top:61.00px;" width="26.00" height="24.00" viewBox="1012 124 26 24"><path d="M1021 139.2 H1018.4 A1.7 1.7 0 0 1 1016.7 137.5 V130.6 A1.7 1.7 0 0 1 1018.4 128.9 H1028.3 A1.7 1.7 0 0 1 1030 130.6 V132" fill="none" stroke="#8c8c8e" stroke-width="1.4" stroke-linecap="round" stroke-linejoin="round" /><rect x="1020.7" y="132.7" width="13" height="10.2" rx="1.8" fill="none" stroke="#8c8c8e" stroke-width="1.4" stroke-linecap="round" stroke-linejoin="round" /><path d="M1020.7 134.5 a1.8 1.8 0 0 1 1.8 -1.8 h9.4 a1.8 1.8 0 0 1 1.8 1.8 v1.3 h-13 z" fill="#8c8c8e"/></svg>
<svg class="abs" style="left:1016.00px;top:133.70px;" width="152.00" height="227.60" viewBox="1090 196.7 152 227.60000000000002">
<defs>
<linearGradient id="sky" gradientUnits="userSpaceOnUse" x1="1242" y1="196" x2="1095" y2="395"><stop offset="0" stop-color="#cdd6db"/><stop offset=".3" stop-color="#dbe0e3"/><stop offset=".62" stop-color="#e9ebea"/><stop offset="1" stop-color="#f3f2ee"/></linearGradient>
<linearGradient id="conc" gradientUnits="userSpaceOnUse" x1="1090" y1="0" x2="1242" y2="0"><stop offset="0" stop-color="#545449"/><stop offset=".5" stop-color="#66655b"/><stop offset="1" stop-color="#76756a"/></linearGradient>
<linearGradient id="pil" gradientUnits="userSpaceOnUse" x1="1116" y1="0" x2="1174" y2="0"><stop offset="0" stop-color="#4a4333"/><stop offset=".09" stop-color="#2e2a1e"/><stop offset=".2" stop-color="#15140e"/><stop offset=".75" stop-color="#0e0e0a"/><stop offset="1" stop-color="#1b1a12"/></linearGradient>
<filter id="nz" x="0" y="0" width="100%" height="100%"><feTurbulence type="fractalNoise" baseFrequency=".22" numOctaves="2" seed="7" result="t"/><feColorMatrix in="t" type="matrix" values="0 0 0 0 .12  0 0 0 0 .12  0 0 0 0 .09  0 0 0 -2.6 1.45"/><feComposite in2="SourceGraphic" operator="in"/></filter>
<filter id="nz2" x="0" y="0" width="100%" height="100%"><feTurbulence type="fractalNoise" baseFrequency=".3" numOctaves="2" seed="3" result="t"/><feColorMatrix in="t" type="matrix" values="0 0 0 0 .45  0 0 0 0 .36  0 0 0 0 .22  0 0 0 -3.2 1.55"/><feComposite in2="SourceGraphic" operator="in"/></filter>
<clipPath id="pc"><rect x="1090" y="196.7" width="152" height="227.6"/></clipPath>
</defs>
<g clip-path="url(#pc)">
<rect x="1090" y="196.7" width="152" height="227.6" fill="url(#sky)"/>
<path d="M1090 383.200 L1242 292.600 V430 H1090 Z" fill="url(#conc)"/>
<path d="M1090 383.200 L1242 292.600 V326 L1090 402 Z" fill="#000" filter="url(#nz)"/>
<path d="M1090 393.500 L1242 309.500 V326 L1090 402 Z" fill="#2a2a20" opacity=".28"/>
<path d="M1090 383.200 L1242 292.600 V295 L1090 385.400 Z" fill="#a5a49a" opacity=".6"/>
<path d="M1090 400.500 L1242 323.200 V430 H1090 Z" fill="#211a0e"/>
<path d="M1173.500 377 L1242 350.300 V373.500 L1173.500 394.500 Z" fill="#47331a"/>
<path d="M1173.500 379.500 L1242 353.500 V361 L1173.500 386 Z" fill="#573d1e" opacity=".55"/>
<path d="M1090 415.600 L1118 405.800 L1116.300 417.500 L1090 424.300 Z" fill="#4e371a"/>
<path d="M1173.500 395 L1242 374 V430 H1173.500 Z" fill="#19140a"/>
<path d="M1131 302 Q1131.500 292.800 1153 292.800 Q1173.800 292.800 1174 301 L1174 430 H1115.500 Z" fill="url(#pil)"/>
<path d="M1131 302 Q1131.500 292.800 1153 292.800 Q1173.800 292.800 1174 301 L1174 430 H1115.500 Z" fill="#000" filter="url(#nz2)" opacity=".32"/>
<path d="M1132.500 300 Q1135 293.600 1153 293.600 Q1172 293.600 1173.600 300 Q1164 304.500 1152 303.500 Q1140 303 1132.500 300 Z" fill="#0b0b07"/>
<path d="M1134 305.500 Q1146 301.800 1156 303.200 Q1166 304.600 1173.300 308.500 L1173.400 337.300 Q1163 331 1152 330.300 Q1142 330 1133 333.200 Z" fill="#d3d1c1"/>
<path d="M1138.500 307.800 l1.700 -1.500 l1.700 1.500 l1.700 -1.500 l1.700 1.500 l1.700 -1.500 l1.700 1.500 l1.700 -1.400 l1.700 1.500 M1163 309.300 l1.600 -1.300 l1.600 1.500 l1.600 -1.300 l1.600 1.600 l1.500 -1.100" fill="none" stroke="#15150f" stroke-width="1"/>
<path d="M1140 312.300 Q1146.500 308.300 1153 312 Q1146.500 315.500 1140 312.300 Z" fill="none" stroke="#15150f" stroke-width="1"/><ellipse cx="1146.800" cy="311.900" rx="2" ry="1.500" fill="#1b2046"/>
<path d="M1161 313.500 Q1166.500 310.800 1171.500 315.600 Q1166 318.800 1161 313.500 Z" fill="none" stroke="#15150f" stroke-width="1"/><ellipse cx="1166.400" cy="314.700" rx="2" ry="1.700" fill="#1b2046"/>
<path d="M1153.500 314 Q1157 318 1162.500 319" fill="none" stroke="#15150f" stroke-width="1"/>
<path d="M1136.500 326 L1137.300 321.300 Q1148 317.500 1158 319.500 Q1166 321.300 1172 326.500 M1139.800 324.800 l.6 -3.300 l1.900 2.800 l.8 -3.500 l1.900 3 l.8 -3.500 l1.900 3.100 l.8 -3.400 l1.900 3.300 l.9 -3.200 l1.900 3.500 l1 -3.100 l1.900 3.700 l1.100 -2.900 l1.800 3.900 l1.200 -2.600 l1.800 4 l1.200 -2.300 l1.700 4" fill="none" stroke="#15150f" stroke-width="1.100"/>
<path d="M1139 329.500 Q1150 324 1160 326.200 Q1167 328 1171.500 332.500 M1144 329.700 Q1153 326.300 1162 329.800 Q1153 331.500 1144 329.700 Z" fill="none" stroke="#15150f" stroke-width=".95"/>
<path d="M1145.500 339 q3.500 -2.500 5.500 .5 q1.500 5 -2.500 8 q-4 -.5 -3 -8.500 M1154 338.500 l2.500 10.500 M1158.500 339.500 q4.500 -2.500 6 1.500 q-1.500 3.500 -5 4.500 q5 .5 6 4 M1156 351 l6 6 l6 -8" fill="none" stroke="#8e8c7c" stroke-width="1.250"/>
<path d="M1144 367 q1 -6.500 6.500 -6 q5 1.500 3 6.500 q-3 4 -8 2 M1153.500 360.500 l5 13.500 l3 -14 M1163.500 362 l1 13 M1163.500 368 l5.500 -1.500 M1169 361 l1.500 15 M1171.500 369 l2 8" fill="none" stroke="#b9b8ab" stroke-width="1.350"/>
<path d="M1147.500 374 l3 .5 M1129 372 q4 -3 7 0 M1127 381 q8 -4 15 1" fill="none" stroke="#8f8d80" stroke-width="1"/>
<path d="M1136 386 q9 -4 17 -1 q7 3 14 -2 M1133 393 q12 3.500 24 0 M1140 398.500 q7 -3 15 .5 q5 2 10 -1 M1128 400 q5 3 9 1" fill="none" stroke="#6a4f28" stroke-width="1.200" opacity=".85"/>
<path d="M1143 391 l4 -6 l3 7 l4 -7 M1158 388 q4 -2 5 2" fill="none" stroke="#7d7462" stroke-width="1" opacity=".7"/>
<path d="M1163.500 399 l2 15 M1169 403.500 l-7 5.500 M1131 404 l3 12 M1126.500 409 l8 -2" fill="none" stroke="#5b6a86" stroke-width="1.100" opacity=".8"/>
<path d="M1132 413.200 Q1134 408.300 1140 409.200 Q1145 411.700 1150 409.400 Q1156.500 408.300 1158.300 413 Q1158 419.500 1153.500 422.800 Q1149.500 420.300 1145.500 423.300 Q1141.500 420.500 1137.300 422.800 Q1132.300 419.500 1132 413.200 Z" fill="#d2c9a4"/>
<path d="M1138 410.200 q7 2.500 14 0 l1.500 2.200 q-8.500 2.600 -17 0 Z" fill="#d99a2e"/>
<path d="M1134.500 414.800 h21 M1137 417.800 q4 2.300 8 -1 q4 3.300 8 1" fill="none" stroke="#17140c" stroke-width="1.800"/>
<path d="M1092.300 334 l3 1.100" stroke="#9b8f6c" stroke-width="1.300"/>
</g></svg>
<div class="abs" style="left:1055.00px;top:372.30px;width:74.70px;height:23.70px;background:#fff;border-radius:5.5px;box-shadow:0 0 0 .5px rgba(0,0,0,.12),0 1px 1.5px rgba(0,0,0,.16)"></div>
<div class="t" style="top:377.00px;font-size:14.5px;color:#2b2b2b;letter-spacing:-0.146px;left:1092.23px;transform:translateX(-50%);">Preview</div>
<div class="t" style="top:447.00px;font-size:23.6px;color:#262626;letter-spacing:0.06px;left:1092.13px;transform:translateX(-50%);">File_116_1786560....</div>
<div class="t" style="top:498.00px;font-size:14.8px;color:#2b2b2b;font-weight:bold;letter-spacing:-0.112px;right:183.51px;">Size:</div>
<div class="t" style="top:498.00px;font-size:14.8px;color:#2b2b2b;letter-spacing:0.071px;left:1075.60px;">918 KB</div>
<div class="t" style="top:529.00px;font-size:14.8px;color:#2b2b2b;font-weight:bold;letter-spacing:0.09px;right:183.31px;">Date Created:</div>
<div class="t" style="top:529.00px;font-size:14.8px;color:#2b2b2b;letter-spacing:0.533px;left:1075.60px;">1970-01-01 08:00:00</div>
<div class="t" style="top:560.00px;font-size:14.8px;color:#2b2b2b;font-weight:bold;letter-spacing:-0.15px;right:183.55px;">Path:</div>
<div class="t" style="top:560.00px;font-size:14.8px;color:#2b2b2b;letter-spacing:0.294px;left:1075.60px;">/Files without filename/...</div>
<svg class="abs" style="left:298.00px;top:716.00px;" width="44.00" height="44.00" viewBox="372 779 44 44"><circle cx="393.7" cy="800.9" r="16" fill="none" stroke="#2acd42" stroke-width="4.4"/><path d="M388.1 802.5 L391.9 806.6 L398.7 797.5" fill="none" stroke="#2acd42" stroke-width="4.3" stroke-linecap="round" stroke-linejoin="round"/></svg>
<div class="t" style="top:722.00px;font-size:17.2px;color:#262626;font-weight:bold;letter-spacing:0.133px;left:355.30px;">Scan Completed</div>
<div class="t" style="top:743.00px;font-size:15.4px;color:#7a7a7a;letter-spacing:0.082px;left:355.30px;">Found: 858 file(s) totaling 7.44 GB</div>
<div class="t" style="top:726.00px;font-size:15.4px;color:#333;letter-spacing:0.162px;right:175.64px;">Selected 0 file(s)</div>
<div class="t" style="top:744.00px;font-size:11.7px;color:#333;letter-spacing:0.154px;right:175.65px;">Zero KB</div>
<div class="abs" style="left:1090.00px;top:720.20px;width:142.40px;height:36.50px;border-radius:6px;background:linear-gradient(#2e8cff,#0f73f6);box-shadow:0 1px 1px rgba(0,60,160,.3)"></div>
<svg class="abs" style="left:1112.00px;top:725.00px;" width="26.00" height="26.00" viewBox="1186 788 26 26"><path d="M1194.6 794.2 A8.3 8.3 0 1 1 1190.65 800" fill="none" stroke="#fff" stroke-width="1.7"/><path d="M1190.9 797.3 L1192.4 792.7 L1196.4 796.6 Z" fill="#fff"/></svg>
<div class="t" style="top:731.00px;font-size:17px;color:#fff;letter-spacing:0.081px;left:1144.00px;">Recover</div>
</div>
</body></html>
